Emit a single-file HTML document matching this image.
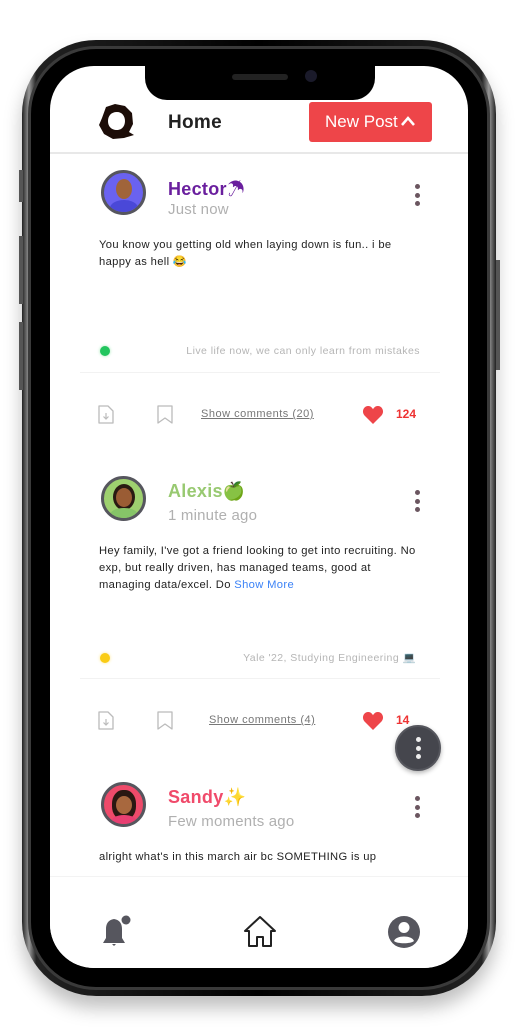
<!DOCTYPE html>
<html><head><meta charset="utf-8"><style>
*{margin:0;padding:0;box-sizing:border-box}
body{width:519px;height:1034px;background:#fff;position:relative;overflow:hidden;font-family:"Liberation Sans","Noto Sans CJK JP",sans-serif}
.abs{position:absolute}
.frame{left:22px;top:40px;width:474px;height:956px;border-radius:74px;background:linear-gradient(90deg,#222,#999 1.5%,#222 3%,#000 50%,#222 97%,#999 98.5%,#222);box-shadow:0 12px 18px rgba(0,0,0,.25)}
.frame2{left:28px;top:46px;width:462px;height:944px;border-radius:68px;background:#000;border:3px solid #3a3a3a}
.screen{left:50px;top:66px;width:418px;height:902px;border-radius:44px;background:#fff;overflow:hidden}
.notch{left:145px;top:60px;width:230px;height:40px;background:#000;border-radius:0 0 22px 22px}
.btnside{background:#555;width:4px}
.t{position:absolute;white-space:nowrap}
.av{position:absolute;width:45px;height:45px;border-radius:50%;border:3px solid #56565e;overflow:hidden}
.dots{position:absolute;width:5px}
.dots i{display:block;width:5px;height:5px;border-radius:50%;background:#6b5660;margin-bottom:3.5px}
.body{font-size:11.2px;color:#222;line-height:17px;letter-spacing:0.35px}
.sub{font-size:15px;color:#b0b0b0;letter-spacing:0.2px}
.nm{font-size:18px;font-weight:bold;letter-spacing:0.3px}
.div{position:absolute;left:80px;width:360px;height:1px;background:#f2f2f2}
.st{font-size:10.5px;color:#b5b5b5;letter-spacing:0.45px}
.sc{font-size:11px;color:#777;text-decoration:underline;letter-spacing:0.5px}
</style></head><body>
<div class="abs frame"></div>
<div class="abs btnside" style="left:19px;top:170px;height:32px"></div>
<div class="abs btnside" style="left:19px;top:236px;height:68px"></div>
<div class="abs btnside" style="left:19px;top:322px;height:68px"></div>
<div class="abs btnside" style="left:496px;top:260px;height:110px"></div>
<div class="abs frame2"></div>
<div class="abs screen"></div>
<div class="abs notch"></div>
<div class="abs" style="left:232px;top:74px;width:56px;height:6px;border-radius:3px;background:#222"></div>
<div class="abs" style="left:305px;top:70px;width:12px;height:12px;border-radius:50%;background:#1a1a2a"></div>

<!-- header -->
<svg class="abs" style="left:98px;top:104px" width="38" height="36" viewBox="0 0 38 36"><path d="M8 3 L17 0 L27 2 L34 9 L35 20 L31 28 L36 31 L26 34 L15 35 L6 30 L1 21 L4 14 Z M19 8 C13 8 10 12 10 17 C10 23 14 26 19 26 C24 26 27 22 27 17 C27 12 24 8 19 8 Z" fill="#1c0d08" fill-rule="evenodd"/></svg>
<div class="t" style="left:168px;top:112px;font-size:19px;font-weight:bold;color:#222;letter-spacing:0.3px">Home</div>
<div class="abs" style="left:309px;top:102px;width:123px;height:40px;background:#ee4549;border-radius:3px"></div>
<div class="t" style="left:325px;top:112px;font-size:17px;color:#fff">New Post</div>
<svg class="abs" style="left:400px;top:115px" width="16" height="12"><path d="M2 10 L8 3 L14 10" stroke="#fff" stroke-width="2.5" fill="none"/></svg>
<div class="abs" style="left:50px;top:152px;width:418px;height:2px;background:#e8e8e8"></div>

<!-- post 1 -->
<div class="av" style="left:101px;top:170px;background:#6a62f0"><div class="abs" style="left:12px;top:6px;width:16px;height:20px;border-radius:50%;background:#a0643a"></div><div class="abs" style="left:6px;top:27px;width:28px;height:16px;border-radius:50%;background:#4a48d8"></div></div>
<div class="t nm" style="left:168px;top:175px;color:#6a1f9e">Hector☂</div>
<div class="t sub" style="left:168px;top:201px">Just now</div>
<div class="dots" style="left:415px;top:184px"><i></i><i></i><i></i></div>
<div class="t body" style="left:99px;top:237px">You know you getting old when laying down is fun.. i be<br>happy as hell 😂</div>
<div class="abs" style="left:100px;top:346px;width:10px;height:10px;border-radius:50%;background:#22c55e;box-shadow:0 0 3px #9fe8b4"></div>
<div class="t st" style="right:99px;top:345px">Live life now, we can only learn from mistakes</div>
<div class="div" style="top:372px"></div>
<svg class="abs" style="left:97px;top:405px" width="18" height="20"><path d="M2 1 H11 L16 6 V18 H2 Z" stroke="#bbb" stroke-width="1.3" fill="none" stroke-linejoin="round"/><path d="M9 8 V14 M6.5 11.5 L9 14 L11.5 11.5" stroke="#bbb" stroke-width="1.2" fill="none"/></svg>
<svg class="abs" style="left:156px;top:405px" width="18" height="20"><path d="M2 1 H16 V18 L9 13 L2 18 Z" stroke="#bbb" stroke-width="1.3" fill="none" stroke-linejoin="round"/></svg>
<div class="t sc" style="left:201px;top:408px">Show comments (20)</div>
<svg class="abs" style="left:362px;top:405px" width="22" height="20"><path d="M11 19 L2.5 10.5 C-1 6.5 2 0.5 6.5 1 C9 1.2 10.3 3 11 4.3 C11.7 3 13 1.2 15.5 1 C20 0.5 23 6.5 19.5 10.5 Z" fill="#ee4549"/></svg>
<div class="t" style="left:396px;top:407px;font-size:12px;font-weight:bold;color:#e33">124</div>

<!-- post 2 -->
<div class="av" style="left:101px;top:476px;background:#9ed06f"><div class="abs" style="left:9px;top:5px;width:22px;height:26px;border-radius:50%;background:#2a1a12"></div><div class="abs" style="left:12px;top:9px;width:16px;height:19px;border-radius:50%;background:#9a5c34"></div><div class="abs" style="left:6px;top:29px;width:28px;height:14px;border-radius:50%;background:#86c468"></div></div>
<div class="t nm" style="left:168px;top:481px;color:#98c971">Alexis🍏</div>
<div class="t sub" style="left:168px;top:507px">1 minute ago</div>
<div class="dots" style="left:415px;top:490px"><i></i><i></i><i></i></div>
<div class="t body" style="left:99px;top:543px">Hey family, I've got a friend looking to get into recruiting. No<br>exp, but really driven, has managed teams, good at<br>managing data/excel. Do <span style="color:#3b82f6">Show More</span></div>
<div class="abs" style="left:100px;top:653px;width:10px;height:10px;border-radius:50%;background:#facc15;box-shadow:0 0 3px #fde68a"></div>
<div class="t st" style="right:103px;top:651px">Yale '22, Studying Engineering 💻</div>
<div class="div" style="top:678px"></div>
<svg class="abs" style="left:97px;top:711px" width="18" height="20"><path d="M2 1 H11 L16 6 V18 H2 Z" stroke="#bbb" stroke-width="1.3" fill="none" stroke-linejoin="round"/><path d="M9 8 V14 M6.5 11.5 L9 14 L11.5 11.5" stroke="#bbb" stroke-width="1.2" fill="none"/></svg>
<svg class="abs" style="left:156px;top:711px" width="18" height="20"><path d="M2 1 H16 V18 L9 13 L2 18 Z" stroke="#bbb" stroke-width="1.3" fill="none" stroke-linejoin="round"/></svg>
<div class="t sc" style="left:209px;top:714px">Show comments (4)</div>
<svg class="abs" style="left:362px;top:711px" width="22" height="20"><path d="M11 19 L2.5 10.5 C-1 6.5 2 0.5 6.5 1 C9 1.2 10.3 3 11 4.3 C11.7 3 13 1.2 15.5 1 C20 0.5 23 6.5 19.5 10.5 Z" fill="#ee4549"/></svg>
<div class="t" style="left:396px;top:713px;font-size:12px;font-weight:bold;color:#e33">14</div>
<div class="abs" style="left:395px;top:725px;width:46px;height:46px;border-radius:50%;background:#45464d;border:2px solid #55565d;box-shadow:0 2px 5px rgba(0,0,0,.3)"></div>
<div class="dots" style="left:415.5px;top:737px"><i style="background:#eee"></i><i style="background:#eee"></i><i style="background:#eee"></i></div>

<!-- post 3 -->
<div class="av" style="left:101px;top:782px;background:#ee4a6a"><div class="abs" style="left:8px;top:5px;width:24px;height:30px;border-radius:45%;background:#2a1812"></div><div class="abs" style="left:12px;top:11px;width:16px;height:18px;border-radius:50%;background:#a8683e"></div><div class="abs" style="left:7px;top:30px;width:26px;height:14px;border-radius:50%;background:#e83f72"></div></div>
<div class="t nm" style="left:168px;top:787px;color:#f04a6a">Sandy✨</div>
<div class="t sub" style="left:168px;top:813px">Few moments ago</div>
<div class="dots" style="left:415px;top:796px"><i></i><i></i><i></i></div>
<div class="t body" style="left:99px;top:849px">alright what's in this march air bc SOMETHING is up</div>

<!-- bottom nav -->
<div class="abs" style="left:50px;top:876px;width:418px;height:92px;background:#fff;border-top:1px solid #f3f3f3;border-radius:0 0 44px 44px"></div>
<svg class="abs" style="left:97px;top:914px" width="38" height="36" viewBox="0 0 38 36"><path d="M17 3 V5 C11 6 9 10 9 15 V24 L6 29 H28 L25 24 V15 C25 10 23 6 17 5 Z" fill="#56565e"/><path d="M15 30 H19 L17 32 Z" fill="#56565e"/><circle cx="29" cy="6" r="4.5" fill="#56565e"/></svg>
<svg class="abs" style="left:243px;top:915px" width="34" height="34" viewBox="0 0 34 34"><path d="M17 2 L2 16 H6 V31 H14 V22 H20 V31 H28 V16 H32 Z" stroke="#222" stroke-width="2" fill="none" stroke-linejoin="round"/></svg>
<svg class="abs" style="left:387px;top:915px" width="34" height="34" viewBox="0 0 34 34"><circle cx="17" cy="17" r="16" fill="#56565e"/><circle cx="17" cy="12.5" r="5.5" fill="#fff"/><path d="M7 26 C9 20 25 20 27 26 C24 29 10 29 7 26 Z" fill="#fff"/></svg>
</body></html>
